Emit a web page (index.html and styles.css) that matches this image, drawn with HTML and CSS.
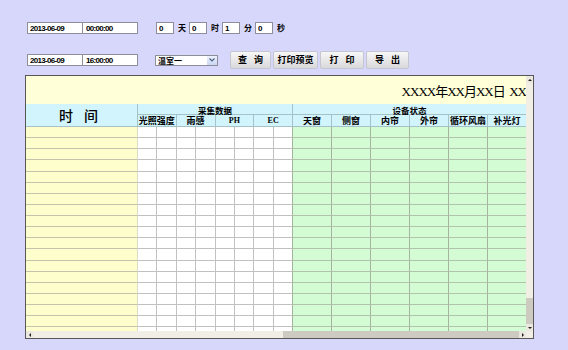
FILE: index.html
```html
<!DOCTYPE html>
<html lang="zh-CN">
<head>
    <meta charset="UTF-8">
    <meta name="viewport" content="width=device-width, initial-scale=1.0">
    <title>数据报表</title>
    <link rel="stylesheet" href="styles.css">
</head>
<body>

<div class="toolbar">
    <!-- 开始时间 + 间隔 -->
    <div class="row">
        <input class="date" value="2013-06-09">
        <input class="time" value="00:00:00">
        <input class="num first" value="0"><span class="unit">天</span>
        <input class="num" value="0"><span class="unit">时</span>
        <input class="num" value="1"><span class="unit">分</span>
        <input class="num" value="0"><span class="unit">秒</span>
    </div>
    <!-- 结束时间 + 温室 + 按钮 -->
    <div class="row row-second">
        <input class="date" value="2013-06-09">
        <input class="time" value="16:00:00">
        <div class="select">
            <span>温室一</span>
            <span class="select-arrow">
                <svg width="6" height="4" viewBox="0 0 6 4"><path d="M0.5 0.5 L3 3 L5.5 0.5" fill="none" stroke="#4d6185" stroke-width="1.2"/></svg>
            </span>
        </div>
        <button class="btn btn-query spaced">查&nbsp;询</button>
        <button class="btn btn-preview">打印预览</button>
        <button class="btn btn-print spaced">打&nbsp;印</button>
        <button class="btn btn-export spaced">导&nbsp;出</button>
    </div>
</div>

<div class="report">
    <div class="report-body">
        <div class="report-title">XXXX年XX月XX日&nbsp;&nbsp;XX</div>
        <div class="grid" id="grid">
            <div class="hd hd-time"><span>时</span><span>间</span></div>
            <div class="hd hd-group hd-collect">采集数据</div>
            <div class="hd hd-group hd-device">设备状态</div>
            <div class="hd sub span2">光照强度</div>
            <div class="hd sub span2">雨感</div>
            <div class="hd sub span2 latin">PH</div>
            <div class="hd sub span2 latin">EC</div>
            <div class="hd sub dev">天窗</div>
            <div class="hd sub dev">侧窗</div>
            <div class="hd sub dev">内帘</div>
            <div class="hd sub dev">外帘</div>
            <div class="hd sub dev">循环风扇</div>
            <div class="hd sub dev">补光灯</div>
        </div>
    </div>
    <div class="vscroll">
        <div class="sb-btn"><span class="arrow arrow-up"></span></div>
        <div class="sb-track"></div>
        <div class="sb-thumb v-thumb"></div>
        <div class="sb-btn"><span class="arrow arrow-down"></span></div>
    </div>
    <div class="hscroll">
        <div class="sb-btn"><span class="arrow arrow-left"></span></div>
        <div class="sb-track"></div>
        <div class="sb-thumb h-thumb"></div>
        <div class="sb-btn"><span class="arrow arrow-right"></span></div>
    </div>
    <div class="corner"></div>
</div>

<script>
    // 生成空的数据行
    const grid = document.getElementById('grid');
    for (let r = 0; r < 19; r++) {
        for (let c = 0; c < 15; c++) {
            const cell = document.createElement('div');
            cell.classList.add('cell');
            if (c === 0) cell.classList.add('cell-time');
            else if (c < 9) cell.classList.add('cell-data');
            else cell.classList.add('cell-device');
            grid.appendChild(cell);
        }
    }
</script>

</body>
</html>
```

FILE: styles.css
```css
body {
    margin: 0;
    background: #d7d7fb;
    font-family: "Noto Sans CJK SC", sans-serif;
}
.toolbar {
    padding: 22px 0 0 27px;
}
.row {
    display: flex;
    align-items: center;
    height: 12px;
}
.row-second {
    height: 18px;
    margin-top: 17px;
}
input {
    box-sizing: border-box;
    height: 12px;
    margin: 0;
    padding: 0 0 0 2px;
    border: 1px solid #8d8d9c;
    background: #fff;
    color: #000;
    font: bold 8px "Liberation Sans", sans-serif;
    letter-spacing: -0.7px;
    outline: none;
}
.date {
    width: 56px;
}
.time {
    width: 56px;
    margin-left: -1px;
    padding-left: 3px;
}
.num {
    width: 18px;
}
.num.first {
    margin-left: 18px;
}
.unit {
    box-sizing: border-box;
    width: 15px;
    padding-left: 4px;
    font-size: 8px;
    font-weight: bold;
    line-height: 12px;
}
.select {
    box-sizing: border-box;
    width: 63px;
    height: 11px;
    margin-left: 17px;
    padding-left: 2px;
    border: 1px solid #8d8d9c;
    background: #fff;
    display: flex;
    align-items: center;
    justify-content: space-between;
    font-size: 8px;
    font-weight: bold;
    line-height: 9px;
}
.select-arrow {
    width: 10px;
    height: 9px;
    background: linear-gradient(#eef3fd, #c9d7f3);
    display: flex;
    align-items: center;
    justify-content: center;
}
.btn {
    box-sizing: border-box;
    height: 18px;
    margin: 0 0 0 2px;
    padding: 0;
    border: 1px solid #c6c6d0;
    border-radius: 2px;
    background: linear-gradient(#f7f7f7, #d9d9dc);
    color: #000;
    font-family: "Noto Sans CJK SC", sans-serif;
    font-size: 9px;
    font-weight: bold;
    line-height: 16px;
}
.spaced {
    word-spacing: 5px;
}
.btn-query {
    width: 41px;
    margin-left: 12px;
}
.btn-preview {
    width: 45px;
}
.btn-print {
    width: 44px;
}
.btn-export {
    width: 43px;
}

/* 报表区域 */
.report {
    display: grid;
    grid-template-columns: 500px 7px;
    grid-template-rows: 255px 7px;
    width: max-content;
    margin: 6px 0 0 25px;
    border: 1px solid #575757;
}
.report-body {
    overflow: hidden;
    background: #fff;
}
.report-title {
    box-sizing: border-box;
    height: 28px;
    padding-top: 9px;
    background: #ffffd8;
    font-family: "Liberation Serif", "Noto Sans CJK SC", serif;
    font-size: 13px;
    line-height: 13px;
    letter-spacing: -1px;
    text-align: right;
    white-space: nowrap;
}
.grid {
    display: grid;
    grid-template-columns: 111px repeat(8, 19.375px) repeat(6, 39px);
    grid-template-rows: 11px 12px;
    grid-auto-rows: 11.125px;
}
.hd {
    box-sizing: border-box;
    background: #d1f4fd;
    border-bottom: 1px solid #a6c2c9;
    font-size: 9px;
    font-weight: bold;
    display: flex;
    align-items: center;
    justify-content: center;
    white-space: nowrap;
}
.hd-time {
    grid-row: 1 / span 2;
    grid-column: 1;
    gap: 11px;
    font-size: 14px;
    font-weight: 500;
    padding-right: 6px;
}
.hd-group {
    border-left: 1px solid #a6c2c9;
    font-size: 8.5px;
    padding-top: 1px;
}
.hd-collect {
    grid-column: 2 / span 8;
}
.hd-device {
    grid-column: 10 / span 6;
}
.sub {
    border-left: 1px solid #a6c2c9;
}
.span2 {
    grid-column: span 2;
}
.latin {
    font-family: "Liberation Serif", serif;
    font-size: 8px;
}
.cell {
    box-sizing: border-box;
    border-bottom: 1px solid #c0c0c0;
}
.cell-time {
    background: #fefecd;
    border-bottom-color: #c3c3ab;
}
.cell-data {
    background: #fff;
    border-left: 1px solid #c2c2c2;
}
.cell-time + .cell-data {
    border-left-color: #dcdcc6;
}
.cell-device {
    background: #d4fcd4;
    border-left: 1px solid #a4b49f;
    border-bottom-color: #b2c3ac;
}

/* 滚动条 */
.vscroll,
.hscroll {
    display: flex;
    background: #f1efe5;
}
.vscroll {
    flex-direction: column;
}
.sb-btn {
    flex: 0 0 7px;
    background: #ebe9df;
    display: flex;
    align-items: center;
    justify-content: center;
}
.sb-track {
    flex: 1;
}
.sb-thumb {
    background: #cdcac2;
}
.v-thumb {
    height: 26px;
}
.h-thumb {
    width: 236px;
}
.corner {
    background: #f1efe5;
}
.arrow {
    width: 0;
    height: 0;
    border: 2px solid transparent;
}
.arrow-up {
    border-bottom-color: #222;
    border-top-width: 0;
}
.arrow-down {
    border-top-color: #222;
    border-bottom-width: 0;
}
.arrow-left {
    border-right-color: #222;
    border-left-width: 0;
}
.arrow-right {
    border-left-color: #222;
    border-right-width: 0;
}
```
